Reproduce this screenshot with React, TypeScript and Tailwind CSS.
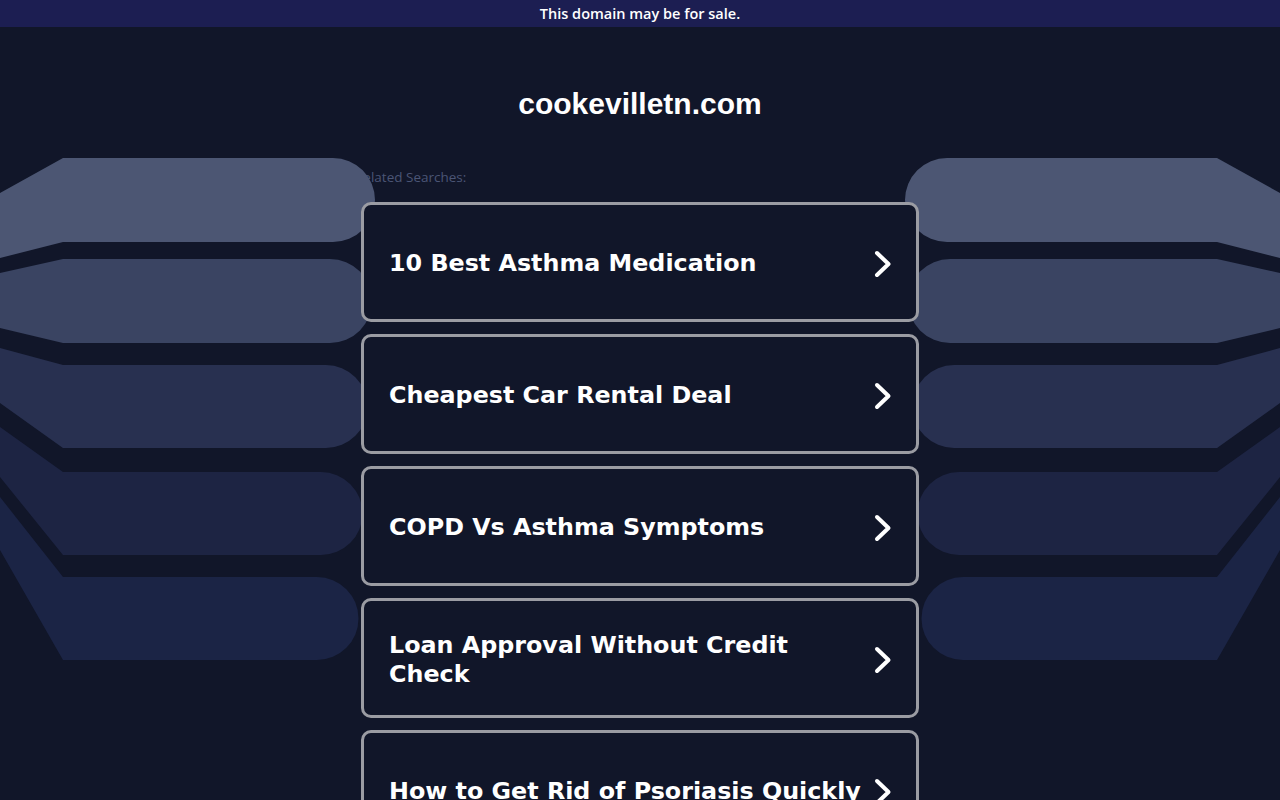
const searches = [
  "10 Best Asthma Medication",
  "Cheapest Car Rental Deal",
  "COPD Vs Asthma Symptoms",
  "Loan Approval Without Credit Check",
  "How to Get Rid of Psoriasis Quickly",
];

// left-side decorative bands, mirrored for the right side
const bands = [
  { d: "M0,193 L63,158 L333,158 A42,42 0 0 1 333,242 L63,242 L0,258 Z", fill: "#4c5673" },
  { d: "M0,273 L63,259 L330,259 A42,42 0 0 1 330,343 L63,343 L0,328 Z", fill: "#3a4462" },
  { d: "M0,348 L63,365 L326,365 A41,41 0 0 1 326,448 L63,448 L0,403 Z", fill: "#283050" },
  { d: "M0,427 L63,472 L321,472 A41,41 0 0 1 321,555 L63,555 L0,477 Z", fill: "#1d2443" },
  { d: "M0,497 L63,577 L317,577 A41,41 0 0 1 317,660 L63,660 L0,550 Z", fill: "#1b2445" },
];

function Bands() {
  return (
    <svg
      className="absolute left-0 top-0 z-10 pointer-events-none"
      width="1280"
      height="800"
      viewBox="0 0 1280 800"
    >
      {bands.map((b, i) => (
        <path key={`l-${i}`} d={b.d} fill={b.fill} />
      ))}
      <g transform="translate(1280,0) scale(-1,1)">
        {bands.map((b, i) => (
          <path key={`r-${i}`} d={b.d} fill={b.fill} />
        ))}
      </g>
    </svg>
  );
}

function Chevron() {
  return (
    <svg width="18" height="28" viewBox="0 0 18 28" className="shrink-0">
      <path
        d="M3 3 L14.5 14 L3 25"
        fill="none"
        stroke="#ffffff"
        strokeWidth="4"
        strokeLinecap="round"
        strokeLinejoin="round"
      />
    </svg>
  );
}

export default function App() {
  return (
    <div className="relative min-h-screen overflow-hidden bg-[#111629]">
      <div className="flex h-[27px] items-center justify-center bg-[#1c1e52] font-['Open_Sans',sans-serif] text-[14.5px] font-semibold text-white">
        This domain may be for sale.
      </div>

      <Bands />

      <div className="mx-auto w-[558px]">
        <h1 className="mt-[60px] text-center font-['Liberation_Sans',Arial,sans-serif] text-[30px] font-bold leading-[34px] text-white">
          cookevilletn.com
        </h1>

        <div className="relative z-0 ml-[-6px] mt-[48px] font-['Open_Sans',sans-serif] text-[13.5px] leading-[16px] text-[#4b5575]">
          Related Searches:
        </div>

        <div className="relative z-20 mt-[17px] flex flex-col gap-[12px]">
          {searches.map((s) => (
            <div
              key={s}
              className="flex h-[120px] items-center justify-between gap-1 rounded-[10px] border-[3px] border-[#9b9ca3] bg-[#111629] pl-[25px] pr-[24px] pt-[3px]"
            >
              <span className="font-['DejaVu_Sans',Verdana,sans-serif] text-[23.8px] font-bold leading-[29px] text-white">
                {s}
              </span>
              <Chevron />
            </div>
          ))}
        </div>
      </div>
    </div>
  );
}
